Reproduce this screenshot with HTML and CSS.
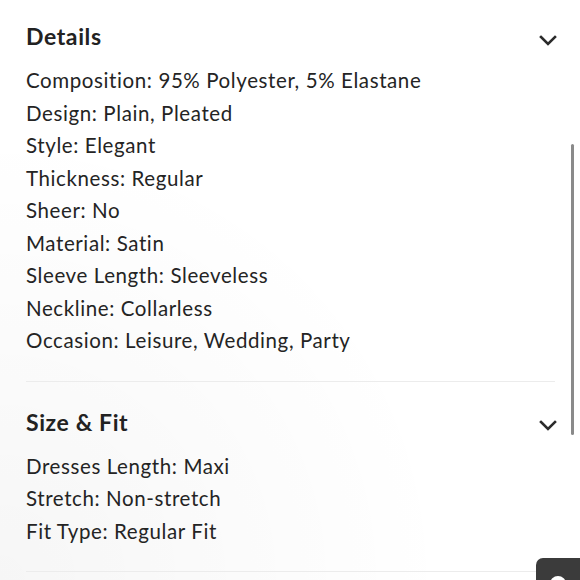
FILE: index.html
```html
<!DOCTYPE html>
<html>
<head>
<meta charset="utf-8">
<link rel="stylesheet" href="styles.css">
</head>
<body>
<div class="page">
  <section class="section first">
    <div class="head">
      <h2 class="title">Details</h2>
      <svg class="chev" width="20" height="12" viewBox="0 0 20 12"><path d="M3 2 L10 9 L17 2" fill="none" stroke="#2b2b2b" stroke-width="2.6" stroke-linecap="square"/></svg>
    </div>
    <ul class="list">
      <li>Composition: 95% Polyester, 5% Elastane</li>
      <li>Design: Plain, Pleated</li>
      <li>Style: Elegant</li>
      <li>Thickness: Regular</li>
      <li>Sheer: No</li>
      <li>Material: Satin</li>
      <li>Sleeve Length: Sleeveless</li>
      <li>Neckline: Collarless</li>
      <li>Occasion: Leisure, Wedding, Party</li>
    </ul>
  </section>
  <section class="section">
    <div class="head">
      <h2 class="title">Size &amp; Fit</h2>
      <svg class="chev" width="20" height="12" viewBox="0 0 20 12"><path d="M3 2 L10 9 L17 2" fill="none" stroke="#2b2b2b" stroke-width="2.6" stroke-linecap="square"/></svg>
    </div>
    <ul class="list">
      <li>Dresses Length: Maxi</li>
      <li>Stretch: Non-stretch</li>
      <li>Fit Type: Regular Fit</li>
    </ul>
  </section>
</div>
<div class="scrollbar"></div>
<div class="fab"><span class="dot"></span></div>
</body>
</html>
```
FILE: styles.css
```css
html, body {
  margin: 0;
  padding: 0;
  height: 100%;
  overflow: hidden;
}
body {
  background: radial-gradient(circle at 0% 100%, rgba(0,0,0,0.035) 0%, rgba(0,0,0,0) 55%), #fff;
  font-family: Lato, "Liberation Sans", sans-serif;
  color: #242424;
  position: relative;
}
.page {
  padding: 0 25px 0 26px;
}
.section {
  padding: 24px 0 24px;
  border-bottom: 1px solid #ececec;
}
.section.first {
  padding-top: 20px;
}
.head {
  display: flex;
  justify-content: space-between;
  align-items: center;
  height: 32px;
}
.title {
  margin: 0;
  font-size: 23px;
  font-weight: 700;
  line-height: 32px;
  letter-spacing: 0.6px;
  color: #222;
}
.chev {
  margin-top: 9px;
  margin-right: -3px;
}
.list {
  list-style: none;
  margin: 12px 0 0;
  padding: 0;
}
.list li {
  font-size: 20.5px;
  line-height: 32.5px;
  letter-spacing: 0.6px;
  color: #242424;
}
.scrollbar {
  position: absolute;
  left: 571px;
  top: 144px;
  width: 3px;
  height: 291px;
  border-radius: 2px;
  background: #8a8a8a;
}
.fab {
  position: absolute;
  left: 536px;
  top: 558px;
  width: 60px;
  height: 40px;
  border-radius: 7px 0 0 0;
  background: #3b3b3b;
}
.dot {
  position: absolute;
  left: 14px;
  top: 18px;
  width: 16px;
  height: 16px;
  border-radius: 50%;
  background: #fff;
}
```
